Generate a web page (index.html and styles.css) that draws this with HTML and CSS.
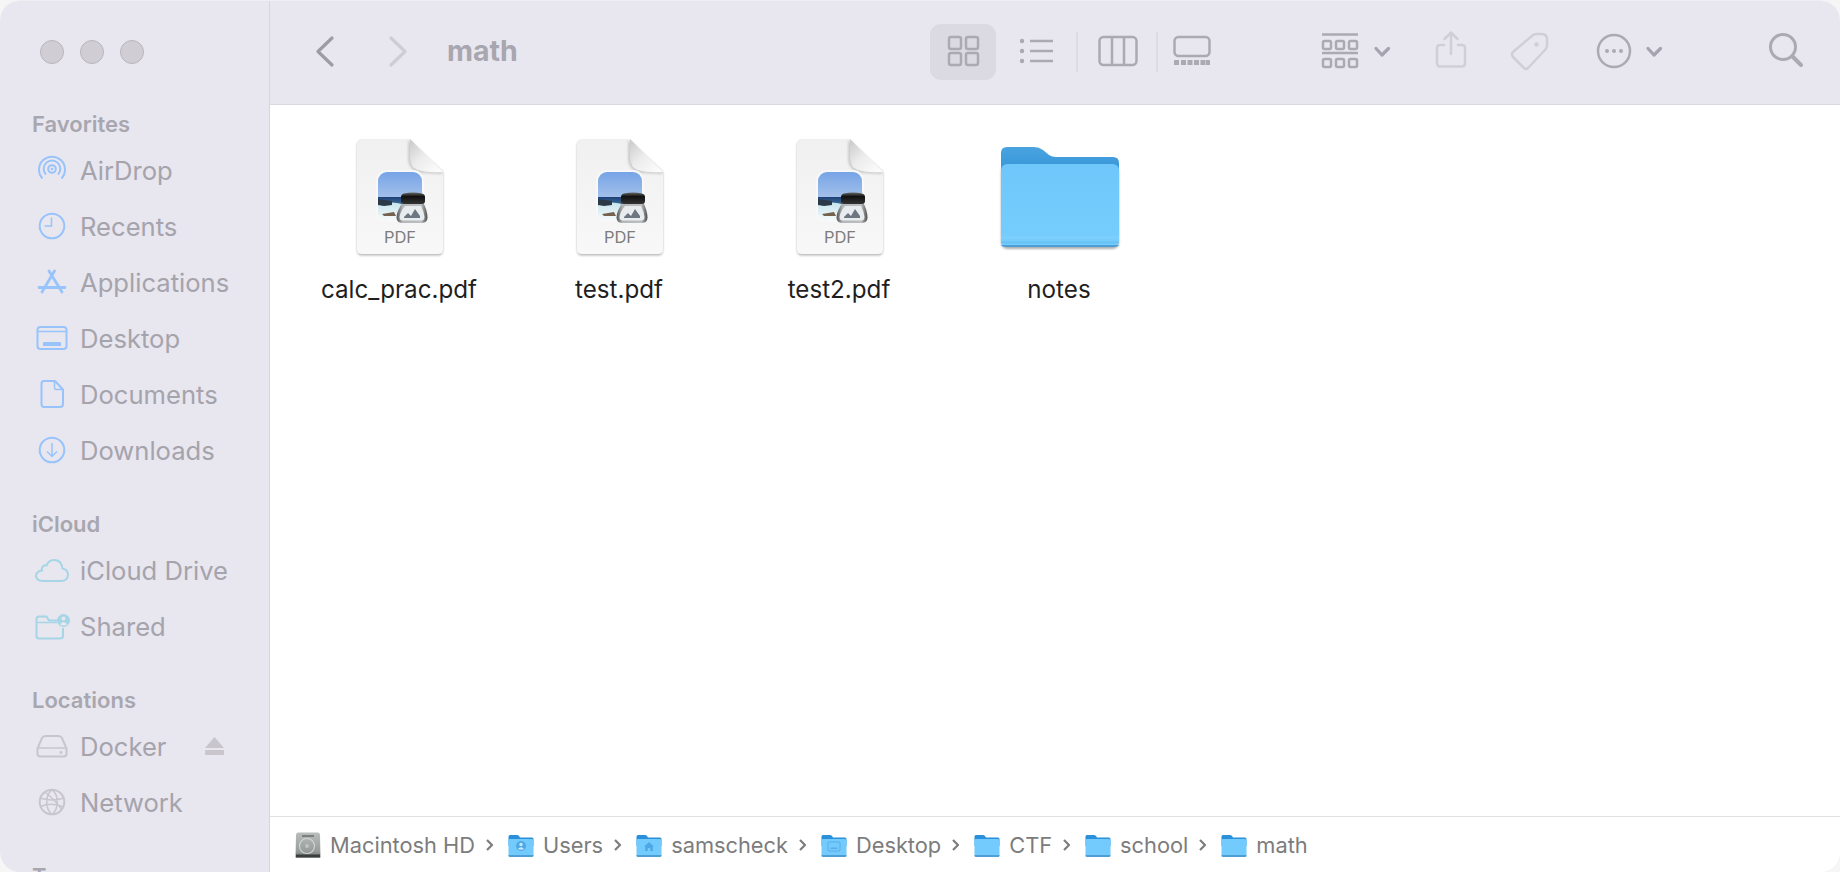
FILE: index.html
```html
<!DOCTYPE html>
<html lang="en">
<head>
<meta charset="utf-8">
<title>math</title>
<link rel="stylesheet" href="styles.css">
</head>
<body>
<svg class="defs" width="0" height="0" aria-hidden="true">
  <defs>
    <linearGradient id="paper" x1="0" y1="0" x2="0" y2="1"><stop offset="0" stop-color="#f0f0f0"/><stop offset="1" stop-color="#f8f8f8"/></linearGradient>
    <linearGradient id="fold" x1="0" y1="0" x2="1" y2="1"><stop offset="0" stop-color="#c9c9c9"/><stop offset=".45" stop-color="#ececec"/><stop offset="1" stop-color="#fff"/></linearGradient>
    <linearGradient id="sky" x1="0" y1="0" x2="0" y2="1"><stop offset="0" stop-color="#76a4e6"/><stop offset="1" stop-color="#cbd9ee"/></linearGradient>
    <linearGradient id="sea" x1="0" y1="0" x2="0" y2="1"><stop offset="0" stop-color="#1d3f74"/><stop offset="1" stop-color="#4f86ad"/></linearGradient>
    <linearGradient id="foam" x1="0" y1="0" x2="0" y2="1"><stop offset="0" stop-color="#c6e6ee"/><stop offset="1" stop-color="#f6fafb"/></linearGradient>
    <linearGradient id="cap" x1="0" y1="0" x2="0" y2="1"><stop offset="0" stop-color="#666"/><stop offset=".35" stop-color="#111"/><stop offset="1" stop-color="#333"/></linearGradient>
    <linearGradient id="glass" x1="0" y1="0" x2="1" y2="0"><stop offset="0" stop-color="#555"/><stop offset=".2" stop-color="#b5b8ba"/><stop offset=".8" stop-color="#bcbfc1"/><stop offset="1" stop-color="#4c4c4c"/></linearGradient>
    <linearGradient id="fback" x1="0" y1="0" x2="0" y2="1"><stop offset="0" stop-color="#4aa3df"/><stop offset="1" stop-color="#1c86d2"/></linearGradient>
    <linearGradient id="ffront" x1="0" y1="0" x2="0" y2="1"><stop offset="0" stop-color="#6fc6fa"/><stop offset="1" stop-color="#76cefd"/></linearGradient>
    <linearGradient id="disk" x1="0" y1="0" x2="0" y2="1"><stop offset="0" stop-color="#b9bebc"/><stop offset=".75" stop-color="#979d9b"/><stop offset="1" stop-color="#6d7371"/></linearGradient>
    <filter id="soft" x="-20%" y="-20%" width="140%" height="140%"><feGaussianBlur stdDeviation="1"/></filter>

    <symbol id="pdf" viewBox="350 132 100 130">
      <path d="M362 141H410L443 173V250Q443 255.500 438 255.500H362Q357 255.500 357 250V146Q357 141 362 141Z" fill="#9a9a9a" filter="url(#soft)" opacity=".7"/>
      <path d="M362 139H410L443 172V250Q443 254 438 254H362Q357 254 357 250V144Q357 139 362 139Z" fill="url(#paper)"/>
      <path d="M408 140V158Q408 170 420 173L442 174L443 172Z" fill="#bdbdbd" filter="url(#soft)" opacity=".7"/>
      <path d="M410 139L443 172Q428 173 418 170Q410 168 410 156Z" fill="url(#fold)"/>
      <rect x="376" y="170" width="48" height="52" rx="11" fill="#f8f8f8"/>
      <rect x="378" y="172" width="44" height="48" rx="9" fill="url(#sky)"/>
      <path d="M378 197H422V208H378Z" fill="url(#sea)"/>
      <path d="M378 205Q392 200 405 205L422 204V211Q422 220 413 220H387Q378 220 378 211Z" fill="url(#foam)"/>
      <path d="M378 199L392 201V205L384 206L378 205Z" fill="#2c3a48"/>
      <path d="M382 214L394 212L396 216L384 216Z" fill="#75634f"/>
      <path d="M403 202H423Q427.500 211 427.500 217.500Q427.500 223 421 223H403Q396.500 223 396.500 217.500Q396.500 211 403 202Z" fill="url(#glass)"/>
      <path d="M405 206H421Q424 212 424.500 217Q424.500 220.500 421 220.500H403Q399.500 220.500 399.500 217Q400 212 405 206Z" fill="#e9ecee"/>
      <path d="M404 217L408 213L411 216L415 209L420 216V218H404Z" fill="#6c7782"/>
      <path d="M404 193.500Q413 191.500 422 193.500Q425 194 425 197V201Q425 204 422 204H404Q401 204 401 201V197Q401 194 404 193.500Z" fill="url(#cap)"/>
      <text class="pdf-text" x="400" y="243" text-anchor="middle">PDF</text>
    </symbol>

    <symbol id="folder" viewBox="995 132 130 130">
      <path d="M1008 166H1112Q1119 166 1119 173V242Q1119 249 1112 249H1008Q1001 249 1001 242V173Q1001 166 1008 166Z" fill="#777" filter="url(#soft)" opacity=".6"/>
      <path d="M1007 147H1034Q1039 147 1043 150L1049 155Q1052 157 1056 157H1113Q1119 157 1119 163V200H1001V153Q1001 147 1007 147Z" fill="url(#fback)"/>
      <path d="M1008 164H1112Q1119 164 1119 171V240Q1119 247 1112 247H1008Q1001 247 1001 240V171Q1001 164 1008 164Z" fill="url(#ffront)"/>
      <path d="M1001 236H1119V239H1001Z" fill="#84d3fd" opacity=".45"/>
      <path d="M1001 241H1119V244H1001Z" fill="#5fb8ee" opacity=".45"/>
      <path d="M1001 245H1119Q1118 247 1112 247H1008Q1002 247 1001 245Z" fill="#4a9fd8"/>
    </symbol>

    <symbol id="mini" viewBox="0 0 26 26">
      <path d="M2 3H9Q10 3 11 4L12 5.500H24Q25.500 5.500 25.500 7V14H.5V4.500Q.5 3 2 3Z" fill="#2a90d9"/>
      <path d="M2 7H24Q25.500 7 25.500 8.500V23Q25.500 24.500 24 24.500H2Q.5 24.500 .5 23V8.500Q.5 7 2 7Z" fill="#72cbfc"/>
      <path d="M.5 23H25.500V23.500Q25.500 25 24 25H2Q.5 25 .5 23.500Z" fill="#4f9fd4"/>
    </symbol>
  </defs>
</svg>

<div class="window">
  <aside class="sidebar">
    <div class="lights"><span class="light"></span><span class="light"></span><span class="light"></span></div>

    <section class="side-section">
      <h2 class="side-head">Favorites</h2>
      <div class="side-row">
        <svg class="side-icon blue" viewBox="0 0 38 38"><path d="M9.500 27.500A13 13 0 1 1 28.500 27.500"/><path d="M13 23.500A8.300 8.300 0 1 1 25 23.500"/><circle cx="19" cy="18" r="3.800"/><circle class="solid" cx="19" cy="18" r="1.300"/></svg>
        <span class="side-label">AirDrop</span>
      </div>
      <div class="side-row">
        <svg class="side-icon blue" viewBox="0 0 38 38"><circle cx="19" cy="19" r="12.300"/><path class="thin" d="M18.500 10.500V19H11.500"/></svg>
        <span class="side-label">Recents</span>
      </div>
      <div class="side-row">
        <svg class="side-icon blue thick" viewBox="0 0 38 38"><path d="M21.500 8L9 29M16 8L29 29M6 24.500H32"/></svg>
        <span class="side-label">Applications</span>
      </div>
      <div class="side-row">
        <svg class="side-icon blue" viewBox="0 0 38 38"><rect x="4.500" y="8" width="29" height="22" rx="3"/><path class="thin" d="M4.500 12.500H33.500"/><rect class="solid" x="10" y="23" width="18" height="4" rx=".5"/></svg>
        <span class="side-label">Desktop</span>
      </div>
      <div class="side-row">
        <svg class="side-icon blue" viewBox="0 0 38 38"><path d="M11 6H22L30 14.500V29Q30 32 27 32H11Q8.500 32 8.500 29V8.500Q8.500 6 11 6Z"/><path class="thin" d="M21.500 6V12.500Q21.500 14.500 23.500 14.500H30"/></svg>
        <span class="side-label">Documents</span>
      </div>
      <div class="side-row">
        <svg class="side-icon blue" viewBox="0 0 38 38"><circle cx="19" cy="19" r="12.300"/><path class="thin" d="M19 12V25.500M14 20.500L19 25.500L24 20.500"/></svg>
        <span class="side-label">Downloads</span>
      </div>
    </section>

    <section class="side-section">
      <h2 class="side-head">iCloud</h2>
      <div class="side-row">
        <svg class="side-icon cyan" viewBox="0 0 38 38"><path d="M10 30H28Q34.500 30 35 24Q35 18.500 29.500 17.500Q28.500 9 21 9Q15.500 9 13.500 14.500Q11 13.500 9.500 16Q8.500 17.500 9 19.500Q3 20.500 3 25Q3.500 30 10 30Z"/></svg>
        <span class="side-label">iCloud Drive</span>
      </div>
      <div class="side-row">
        <svg class="side-icon cyan" viewBox="0 0 38 38"><path d="M28 13.500H16L13.500 9.500H6Q3.500 9.500 3.500 12V29Q3.500 31.500 6 31.500H27Q30 31.500 30 29V21"/><path class="thin" d="M3.500 15.500H24"/><circle class="solid" cx="30.500" cy="13.500" r="6.500"/><circle class="hole" cx="30.500" cy="11.500" r="2"/><path class="hole" d="M26.800 17.500Q30.500 12.500 34.200 17.500Q30.500 19.500 26.800 17.500Z"/></svg>
        <span class="side-label">Shared</span>
      </div>
    </section>

    <section class="side-section">
      <h2 class="side-head">Locations</h2>
      <div class="side-row">
        <svg class="side-icon gray" viewBox="0 0 38 38"><path d="M4.500 21.500L9 11Q10 9 12.500 9H25.500Q28 9 29 11L33.500 21.500V26.500Q33.500 29.500 30.500 29.500H7.500Q4.500 29.500 4.500 26.500Z"/><path class="thin" d="M4.800 21H33.200"/><circle class="solid" cx="28" cy="25.500" r="1.400"/></svg>
        <span class="side-label">Docker</span>
        <svg class="eject" viewBox="0 0 19 18"><path d="M9.500 0L19 11H0Z"/><rect y="13" width="19" height="5" rx="1"/></svg>
      </div>
      <div class="side-row">
        <svg class="side-icon gray" viewBox="0 0 38 38"><circle cx="19" cy="19" r="12.300"/><path class="thin" d="M19 6.700C12 12 12 26 19 31.300M19 6.700C26 12 26 26 19 31.300M7 15Q19 19 31 15M7.500 23.500Q19 19 30.500 24M12 9Q22 17 29 27"/></svg>
        <span class="side-label">Network</span>
      </div>
    </section>

    <section class="side-section">
      <h2 class="side-head">Tags</h2>
    </section>
  </aside>

  <div class="main">
    <header class="toolbar">
      <svg class="tb back" viewBox="310 24 30 56"><path class="s-dark" d="M332 38L318 51.500L332 65"/></svg>
      <svg class="tb forward" viewBox="383 24 30 56"><path class="s-light" d="M391 38L405 51.500L391 65"/></svg>
      <h1 class="title">math</h1>

      <div class="view-sel">
        <svg class="tb" viewBox="930 24 66 56"><rect class="s-icon" x="949" y="37" width="12" height="12" rx="2"/><rect class="s-icon" x="966" y="37" width="12" height="12" rx="2"/><rect class="s-icon" x="949" y="53" width="12" height="12" rx="2"/><rect class="s-icon" x="966" y="53" width="12" height="12" rx="2"/></svg>
      </div>
      <svg class="tb list" viewBox="1006 24 60 56"><circle class="f-icon" cx="1022" cy="41" r="2.200"/><circle class="f-icon" cx="1022" cy="51" r="2.200"/><circle class="f-icon" cx="1022" cy="61" r="2.200"/><path class="s-icon" d="M1030 41H1053M1030 51H1053M1030 61H1053"/></svg>
      <span class="sep sep-a"></span>
      <svg class="tb cols" viewBox="1088 24 60 56"><rect class="s-icon" x="1099.500" y="37" width="37" height="28" rx="4"/><path class="s-icon" d="M1112 37V65M1124 37V65"/></svg>
      <span class="sep sep-b"></span>
      <svg class="tb gallery" viewBox="1167 24 50 56"><rect class="s-icon" x="1174.500" y="37" width="35" height="19" rx="4"/><path class="f-icon" d="M1174 60h5v5h-5zM1181 60h5v5h-5zM1187.500 60h5v5h-5zM1194 60h5v5h-5zM1200.500 60h5v5h-5zM1206 60h4v5h-4z"/></svg>

      <svg class="tb group" viewBox="1315 24 81 56"><path class="s-icon" d="M1322 34.500H1358M1322 53H1358"/><rect class="s-icon" x="1323" y="41" width="8" height="8" rx="1.500"/><rect class="s-icon" x="1336" y="41" width="8" height="8" rx="1.500"/><rect class="s-icon" x="1349" y="41" width="8" height="8" rx="1.500"/><rect class="s-icon" x="1323" y="59" width="8" height="8" rx="1.500"/><rect class="s-icon" x="1336" y="59" width="8" height="8" rx="1.500"/><rect class="s-icon" x="1349" y="59" width="8" height="8" rx="1.500"/><path class="s-chev" d="M1376 48.500L1382 55L1388.500 48.500"/></svg>
      <svg class="tb share" viewBox="1430 24 42 56"><path class="s-off" d="M1444 45H1440Q1437 45 1437 48V63Q1437 66.500 1440 66.500H1462Q1465 66.500 1465 63V48Q1465 45 1462 45H1458"/><path class="s-off" d="M1451 54V33M1444.500 39L1451 32.500L1457.500 39"/></svg>
      <svg class="tb tag" viewBox="1505 24 49 56"><path class="s-off" d="M1513 52L1533 35Q1535 34 1537 34H1542Q1547 34.500 1547 39V46Q1547 48 1545 50L1528 68Q1526 70 1524 68L1513 57Q1511 54 1513 52Z"/><circle class="f-off" cx="1536.500" cy="44.500" r="2.200"/></svg>
      <svg class="tb more" viewBox="1590 24 80 56"><circle class="s-icon" cx="1614" cy="51" r="16"/><circle class="f-icon" cx="1607" cy="51" r="2"/><circle class="f-icon" cx="1614" cy="51" r="2"/><circle class="f-icon" cx="1621" cy="51" r="2"/><path class="s-chev" d="M1648 48.500L1654 55L1660.500 48.500"/></svg>
      <svg class="tb search" viewBox="1762 24 48 56"><circle class="s-icon wide" cx="1782" cy="47" r="12.500"/><path class="s-handle" d="M1791.500 56.500L1800 65"/></svg>
    </header>

    <main class="files">
      <figure class="file">
        <svg class="file-icon"><use href="#pdf"/></svg>
        <figcaption class="file-name">calc_prac.pdf</figcaption>
      </figure>
      <figure class="file">
        <svg class="file-icon"><use href="#pdf"/></svg>
        <figcaption class="file-name">test.pdf</figcaption>
      </figure>
      <figure class="file">
        <svg class="file-icon"><use href="#pdf"/></svg>
        <figcaption class="file-name">test2.pdf</figcaption>
      </figure>
      <figure class="file">
        <svg class="file-icon"><use href="#folder"/></svg>
        <figcaption class="file-name">notes</figcaption>
      </figure>
    </main>

    <footer class="pathbar">
      <svg class="crumb-icon" viewBox="0 0 26 26"><path d="M3 .5H23Q25 .5 25 3L25.500 25.500H.5L1 3Q1 .5 3 .5Z" fill="url(#disk)"/><circle cx="12" cy="14" r="7.500" fill="none" stroke="#d2d6d5" stroke-width="1.100"/><circle cx="12" cy="14" r="2" fill="#c0c5c4"/><rect x="7" y="3" width="12" height="2" fill="#7b8180"/><rect x="1" y="22.500" width="24" height="3" fill="#3a3e3d"/></svg>
      <span class="crumb-text">Macintosh HD</span>
      <svg class="crumb-sep" viewBox="0 0 7 12"><path d="M1 1L6 6L1 11"/></svg>
      <svg class="crumb-icon" viewBox="0 0 26 26"><use href="#mini"/><circle cx="13" cy="14" r="5" fill="#4ea8e6"/><circle cx="13" cy="12.500" r="1.700" fill="#c5e8fb"/><path d="M9.800 17Q13 13.500 16.200 17Q13 18.500 9.800 17Z" fill="#c5e8fb"/></svg>
      <span class="crumb-text">Users</span>
      <svg class="crumb-sep" viewBox="0 0 7 12"><path d="M1 1L6 6L1 11"/></svg>
      <svg class="crumb-icon" viewBox="0 0 26 26"><use href="#mini"/><path d="M13 10L18 14.500H16.800V19H14.300V16H11.700V19H9.200V14.500H8Z" fill="#4ea8e6"/></svg>
      <span class="crumb-text">samscheck</span>
      <svg class="crumb-sep" viewBox="0 0 7 12"><path d="M1 1L6 6L1 11"/></svg>
      <svg class="crumb-icon" viewBox="0 0 26 26"><use href="#mini"/><rect x="7" y="10" width="12" height="9" rx="1" fill="none" stroke="#5aaee8"/><rect x="9.500" y="15.500" width="7" height="1.500" fill="#5aaee8"/></svg>
      <span class="crumb-text">Desktop</span>
      <svg class="crumb-sep" viewBox="0 0 7 12"><path d="M1 1L6 6L1 11"/></svg>
      <svg class="crumb-icon" viewBox="0 0 26 26"><use href="#mini"/></svg>
      <span class="crumb-text">CTF</span>
      <svg class="crumb-sep" viewBox="0 0 7 12"><path d="M1 1L6 6L1 11"/></svg>
      <svg class="crumb-icon" viewBox="0 0 26 26"><use href="#mini"/></svg>
      <span class="crumb-text">school</span>
      <svg class="crumb-sep" viewBox="0 0 7 12"><path d="M1 1L6 6L1 11"/></svg>
      <svg class="crumb-icon" viewBox="0 0 26 26"><use href="#mini"/></svg>
      <span class="crumb-text">math</span>
    </footer>
  </div>
</div>
</body>
</html>
```
FILE: styles.css
```css
* { box-sizing: border-box; }
html, body { margin: 0; height: 100%; }
body {
  background: #f6f6f7;
  font-family: Inter, "Liberation Sans", sans-serif;
  overflow: hidden;
}
.defs { display: block; height: 0; }
.window {
  display: flex;
  width: 1840px;
  height: 872px;
  background: #fff;
  border-top: 1px solid #efeef3;
  border-radius: 20px;
  overflow: hidden;
}

/* sidebar */
.sidebar {
  width: 270px;
  flex: none;
  height: 871px;
  overflow: hidden;
  background: #e8e6ef;
  border-right: 1px solid #d7d5dc;
  padding-top: 39px;
}
.lights { display: flex; gap: 16px; padding-left: 40px; margin-bottom: 46px; }
.light {
  width: 24px;
  height: 24px;
  border-radius: 50%;
  background: #d0cdd4;
  border: 1px solid #b9b6be;
}
.side-section { margin-bottom: 32px; }
.side-head {
  margin: 0 0 4px;
  padding-left: 32px;
  font-size: 22px;
  line-height: 28px;
  font-weight: 600;
  color: #a8a6af;
}
.side-row {
  display: flex;
  align-items: center;
  height: 56px;
  padding: 0 45px 0 33px;
  gap: 9px;
  font-size: 25.600px;
  color: #a5a3ac;
}
.side-label { white-space: nowrap; }
.side-icon { width: 38px; height: 38px; flex: none; fill: none; stroke-width: 2; }
.side-icon .thin { stroke-width: 1.500; }
.side-icon.thick { stroke-width: 2.800; stroke-linecap: round; }
.blue { stroke: #98c4fb; }
.cyan { stroke: #a6d6e6; }
.gray { stroke: #c8c6cc; }
.side-icon .solid { stroke: none; }
.blue .solid { fill: #98c4fb; }
.cyan .solid { fill: #a6d6e6; }
.gray .solid { fill: #c8c6cc; }
.side-icon .hole { fill: #e8e6ef; stroke: none; }
.eject { width: 19px; height: 18px; margin-left: auto; fill: #c8c6cc; }

/* main */
.main { flex: 1; display: flex; flex-direction: column; min-width: 0; }
.toolbar {
  height: 104px;
  flex: none;
  display: flex;
  align-items: center;
  padding: 0 0 1px 40px;
  background: #e8e6ef;
  border-bottom: 1px solid #dad8df;
}
.tb { height: 56px; flex: none; display: block; fill: none; }
.back { width: 30px; }
.forward { width: 30px; margin-left: 43px; }
.title {
  margin: -3px 0 0 34px;
  width: 483px;
  flex: none;
  font-size: 28.500px;
  font-weight: 700;
  line-height: 40px;
  color: #a8a6af;
}
.view-sel { width: 66px; height: 56px; background: #dbd9e1; border-radius: 11px; flex: none; }
.view-sel .tb { width: 66px; }
.list { width: 60px; margin-left: 10px; }
.sep { width: 2px; height: 40px; background: #dcdae2; flex: none; }
.sep-a { margin-left: 10px; }
.cols { width: 60px; margin-left: 10px; }
.sep-b { margin-left: 8px; }
.gallery { width: 50px; margin-left: 9px; }
.group { width: 81px; margin-left: 98px; }
.share { width: 42px; margin-left: 34px; }
.tag { width: 49px; margin-left: 33px; }
.more { width: 80px; margin-left: 36px; }
.search { width: 48px; margin-left: 93px; }

.s-dark, .s-light { stroke-width: 3.200; stroke-linecap: round; stroke-linejoin: round; }
.s-dark { stroke: #9d9ba4; }
.s-light { stroke: #cfcdd4; }
.s-icon { stroke: #aba9b2; stroke-width: 2.500; fill: none; }
.s-icon.wide { stroke-width: 3; }
.f-icon { fill: #aba9b2; stroke: none; }
.s-chev { stroke: #a5a3ac; stroke-width: 3.200; stroke-linecap: round; stroke-linejoin: round; }
.s-off { stroke: #d1cfd6; stroke-width: 2.500; fill: none; stroke-linecap: round; stroke-linejoin: round; }
.f-off { fill: #d1cfd6; }
.s-handle { stroke: #aba9b2; stroke-width: 4; stroke-linecap: round; }

/* files */
.files {
  flex: 1;
  display: flex;
  align-items: flex-start;
  padding: 27px 0 0 20px;
  background: #fff;
}
.file { width: 220px; margin: 0; display: flex; flex-direction: column; align-items: center; }
.file-icon { width: 100px; height: 130px; display: block; }
.file:last-child .file-icon { width: 130px; }
.file-name {
  margin-top: 13px;
  padding-right: 2px;
  font-size: 24.200px;
  line-height: 30px;
  color: #1f1f1f;
  white-space: nowrap;
}
.pdf-text { font-family: Inter, "Liberation Sans", sans-serif; font-size: 16.500px; fill: #7d7d7d; }

/* path bar */
.pathbar {
  height: 56px;
  flex: none;
  display: flex;
  align-items: center;
  padding-left: 25px;
  background: #fff;
  border-top: 1px solid #e2e2e2;
}
.crumb-icon { width: 26px; height: 26px; flex: none; }
.crumb-text { margin: 0 11px 0 9px; font-size: 21.800px; color: #7c7c7c; white-space: nowrap; }
.crumb-sep { width: 7px; height: 12px; margin-right: 15px; fill: none; stroke: #7c7c7c; stroke-width: 2.200; flex: none; }
```
